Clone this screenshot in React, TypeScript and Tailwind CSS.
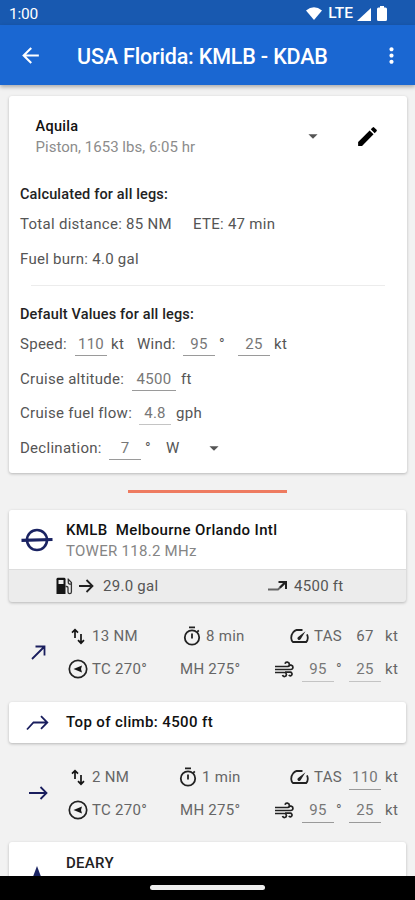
import type { ReactNode } from "react";
import { MdArrowBack, MdArrowDropDown, MdEdit, MdMoreVert } from "react-icons/md";

function Field({ value, className = "w-8", faint = false }: { value: string; className?: string; faint?: boolean }) {
  return (
    <span className={`mb-px flex h-[25px] shrink-0 items-center justify-center border-b-[1.5px] pt-0.5 text-[#777] ${faint ? "border-[#c4c4c4]" : "border-[#9a9a9a]"} ${className}`}>
      {value}
    </span>
  );
}

function Row({ children, className = "" }: { children: ReactNode; className?: string }) {
  return <div className={`flex h-[34.6px] items-center whitespace-pre ${className}`}>{children}</div>;
}

function SwapIcon() {
  return (
    <svg width="14" height="17" viewBox="0 0 14 17" fill="none" stroke="#151515" strokeWidth="1.7">
      <path d="M4 10V2M1 4.6 4 1.6l3 3M10 6v8.600M7 12.200l3 3 3-3" />
    </svg>
  );
}

function TimerIcon() {
  return (
    <svg className="-mt-0.5" width="18" height="20" viewBox="0 0 18 20" fill="none" stroke="#222" strokeWidth="1.8">
      <circle cx="9" cy="11.500" r="7.200" />
      <path d="M6 1.400h6M9 7.500v5M14.300 5.800l1.500-1.500" />
    </svg>
  );
}

function CourseIcon() {
  return (
    <svg className="-mt-0.5" width="20" height="20" viewBox="0 0 20 20">
      <circle cx="10" cy="10" r="8.700" fill="none" stroke="#222" strokeWidth="1.700" />
      <path d="M5.500 10 14 6.500 13 10l1 3.500z" fill="#151515" />
    </svg>
  );
}

function GaugeIcon() {
  return (
    <svg className="-mt-px" width="19" height="16" viewBox="0 0 19 16" fill="none" stroke="#222" strokeWidth="1.800">
      <path d="M12.500 2H6.500Q4.500 2.300 3 4.500 1 7 1.200 10q.2 2.500 1.600 4h13.400q1.500-1.500 1.600-4 0-2-.8-3.600" strokeLinejoin="round" />
      <path d="M7.800 9.200 15.500 3.300 10.600 11.300a1.700 1.700 0 0 1-2.800-2.100z" fill="#222" stroke="none" />
    </svg>
  );
}

function WindIcon() {
  return (
    <svg className="-mt-px" width="20" height="17" viewBox="0 0 20 17" fill="none" stroke="#222" strokeWidth="1.700">
      <path d="M1 5.500h12.200a2.200 2.200 0 1 0-2.200-2.700M1 8.500h15.700a2.200 2.200 0 1 0-2.100-2.800M1 11.500h9.500a2 2 0 1 1-2 2.600M11 11.200h5.300a1.800 1.800 0 1 1-1.500 2.900" />
    </svg>
  );
}

function FuelIcon() {
  return (
    <svg width="17" height="18" viewBox="0 0 17 18">
      <path d="M.5 17V2.200Q.5.800 2 .800h6Q9.500.800 9.500 2.200V17z" fill="#151515" />
      <path d="M2.500 3h5v4h-5z" fill="#eee" />
      <path d="M9.500 9.500h1.200q1.300 0 1.300 1.300v4.200a1.700 1.700 0 0 0 3.400 0V5.500L11.700 1.600M12.300 2.800v3q0 1.500 3 1.200" fill="none" stroke="#333" strokeWidth="1.300" />
    </svg>
  );
}

type LegProps = {
  icon: ReactNode;
  distance: string;
  time: string;
  timeClass: string;
  tas: ReactNode;
  faint?: boolean;
};

function Leg({ icon, distance, time, timeClass, tas, faint }: LegProps) {
  return (
    <div className="flex h-[100px] shrink-0 text-[#666]">
      <div className="flex w-[67px] shrink-0 justify-center pt-[43px] pl-[9px]">{icon}</div>
      <div className="grid flex-1 grid-cols-[112px_94px_1fr] grid-rows-[33px_33px] items-center pt-[18px] whitespace-pre">
        <div className="flex items-center">
          <span className="ml-1 w-[21px]"><SwapIcon /></span>
          {distance}
        </div>
        <div className={`flex items-center gap-[5px] ${timeClass}`}>
          <TimerIcon />
          {time}
        </div>
        <div className="flex items-center pl-[17px]">
          <span className="w-6"><GaugeIcon /></span>
          <span className="w-[35px]">TAS</span>
          {tas}
          <span className="ml-1">kt</span>
        </div>
        <div className="flex items-center pl-px">
          <span className="w-[24px]"><CourseIcon /></span>
          TC 270°
        </div>
        <div className="pl-px">MH 275°</div>
        <div className="flex items-center pl-px">
          <span className="w-[28px]"><WindIcon /></span>
          <Field value="95" faint={faint} />
          <span className="w-[15px] pl-0.5">°</span>
          <Field value="25" faint={faint} />
          <span className="ml-1">kt</span>
        </div>
      </div>
    </div>
  );
}

export default function App() {
  return (
    <div className="relative flex h-[900px] w-[415px] flex-col overflow-hidden bg-[#f2f2f2] font-[Roboto,sans-serif] text-[15px] tracking-[0.28px] text-[#555]">
      <div className="flex h-[25px] shrink-0 items-center bg-[#1859b0] pr-[28px] pl-[9px] text-[15.5px] text-white">
        <span className="pt-1 tracking-[-0.2px]">1:00</span>
        <svg className="mt-0.5 ml-auto" width="16" height="13" viewBox="0 0 16 13" fill="#fff">
          <path d="M0 3.500Q8-3 16 3.500L8 13z" />
        </svg>
        <span className="ml-1.5 pt-0.5 font-medium tracking-normal">LTE</span>
        <svg className="mt-1 ml-1" width="14" height="13" viewBox="0 0 14 13" fill="#fff">
          <path d="M14 0v13H0z" />
        </svg>
        <svg className="mt-0.5 ml-[6px]" width="10" height="15" viewBox="0 0 10 15" fill="#fff">
          <path d="M3 0h4v1.500h1.500Q10 1.500 10 3v10.500Q10 15 8.500 15h-7Q0 15 0 13.500V3Q0 1.500 1.500 1.500H3z" />
        </svg>
      </div>
      <header className="z-10 flex h-[60px] shrink-0 items-center bg-[#1a67d2] pr-[11px] pl-[18px] text-white shadow-[0_2px_4px_rgba(0,0,0,0.3)]">
        <MdArrowBack size={25} />
        <h1 className="ml-[34px] flex-1 pt-1 text-[21.5px] font-medium tracking-[-0.17px] whitespace-nowrap">USA Florida: KMLB - KDAB</h1>
        <MdMoreVert size={25} />
      </header>

      <section className="mx-[9px] mt-[11px] h-[377px] w-[398px] shrink-0 rounded-[3px] bg-white px-[11px] shadow-[0_1px_3px_rgba(0,0,0,0.25)]">
        <div className="flex h-[80px] items-center pl-[15.5px]">
          <div className="flex-1 pt-0.5 leading-[20px]">
            <div className="text-[14.5px] font-medium text-[#111]">Aquila</div>
            <div className="tracking-[0.02px] text-[#8c8c8c]">Piston, 1653 lbs, 6:05 hr</div>
          </div>
          <MdArrowDropDown size={22} />
          <MdEdit size={25} color="#000" className="mr-[16px] ml-[31px]" />
        </div>
        <div className="mt-px flex h-[34px] items-center pt-0.5 text-[14.5px] font-medium tracking-[0.15px] text-[#222]">Calculated for all legs:</div>
        <div className="flex h-[27px] items-center">
          <span className="w-[173px]">Total distance: 85 NM</span>
          <span>ETE: 47 min</span>
        </div>
        <div className="mt-[4px] flex h-[34px] items-center">Fuel burn: 4.0 gal</div>
        <div className="mx-[11px] mt-[9px] h-px bg-[#ececec]" />
        <div className="mt-[11px] flex h-[34px] items-center pt-0.5 text-[14.5px] font-medium tracking-[0.15px] text-[#222]">Default Values for all legs:</div>
        <Row className="-mt-[4px]">
          <span className="w-[55px]">Speed:</span>
          <Field value="110" />
          <span className="ml-1 w-[26px]">kt</span>
          <span className="w-[46px]">Wind:</span>
          <Field value="95" />
          <span className="w-[23px] pl-1">°</span>
          <Field value="25" />
          <span className="ml-1">kt</span>
        </Row>
        <Row>
          <span className="w-[112px]">Cruise altitude:</span>
          <Field value="4500" className="w-11" />
          <span className="ml-[5px]">ft</span>
        </Row>
        <Row>
          <span className="w-[119px]">Cruise fuel flow:</span>
          <Field value="4.8" faint />
          <span className="ml-[5px]">gph</span>
        </Row>
        <Row>
          <span className="w-[89px]">Declination:</span>
          <Field value="7" />
          <span className="w-[25px] pl-1">°</span>
          <span className="w-[37px]">W</span>
          <MdArrowDropDown size={22} />
        </Row>
      </section>

      <div className="mt-[17px] ml-[128px] h-[3px] w-[159px] shrink-0 bg-[#ee7b60]" />

      <section className="mx-[9px] mt-[17px] h-[92px] shrink-0 rounded-[3px] bg-[#ececec] shadow-[0_1px_3px_rgba(0,0,0,0.25)]">
        <div className="flex h-[59px] items-center rounded-t-[3px] bg-white">
          <svg className="ml-3 w-8" height="24" viewBox="0 0 32 24" fill="none" stroke="#1a2362" strokeWidth="2.600">
            <circle cx="16" cy="12" r="10" />
            <path d="M.5 12.300 31.500 11.500" strokeWidth="3.200" />
          </svg>
          <div className="ml-[13px] pt-0.5 leading-[21px] whitespace-pre">
            <div className="font-medium tracking-[0.36px] text-[#111]">KMLB  Melbourne Orlando Intl</div>
            <div className="text-[#858585]">TOWER 118.2 MHz</div>
          </div>
        </div>
        <div className="flex h-[33px] items-center border-t border-[#ddd] pl-[47px]">
          <FuelIcon />
          <svg className="ml-[6px]" width="15" height="14" viewBox="0 0 15 14" fill="none" stroke="#222" strokeWidth="1.800">
            <path d="M0 7h13.500M7.500 1l6 6-6 6" />
          </svg>
          <span className="ml-[9px] w-[165px]">29.0 gal</span>
          <svg width="20" height="12" viewBox="0 0 20 12" fill="none" strokeWidth="2">
            <path d="M0 9.500h10L17 3" stroke="#666" />
            <path d="M10.500 2h7.500v7M17.500 2 12 7.500" stroke="#222" />
          </svg>
          <span className="ml-[6px]">4500 ft</span>
        </div>
      </section>

      <Leg
        icon={
          <svg width="15" height="15" viewBox="0 0 15 15" fill="none" stroke="#1a1e5e" strokeWidth="1.800">
            <path d="M1 14 13.500 1.500M4.500 1.500h9v9" />
          </svg>
        }
        distance="13 NM"
        time="8 min"
        timeClass="pl-[4px]"
        tas={<span className="w-8 text-center">67</span>}
        faint
      />

      <section className="mx-[9px] flex h-[41px] shrink-0 items-center rounded-[3px] bg-white pl-[17px] text-[#111] shadow-[0_1px_3px_rgba(0,0,0,0.25)]">
        <svg width="23" height="16" viewBox="0 0 23 16" fill="none" stroke="#1a1e5e" strokeWidth="1.800">
          <path d="M1 14.500 7.500 7.500H21M15 1.200l6.300 6.300-6.300 6.300" />
        </svg>
        <span className="ml-[17px] font-medium tracking-[0.38px]">Top of climb: 4500 ft</span>
      </section>

      <Leg
        icon={
          <svg width="19" height="14" viewBox="0 0 19 14" fill="none" stroke="#1a1e5e" strokeWidth="1.800">
            <path d="M0 7h17.500M11.500 1l6 6-6 6" />
          </svg>
        }
        distance="2 NM"
        time="1 min"
        timeClass=""
        tas={<Field value="110" />}
      />

      <section className="mx-[9px] -mt-px flex h-[60px] shrink-0 rounded-[3px] bg-white shadow-[0_1px_3px_rgba(0,0,0,0.25)]">
        <svg className="mt-[24px] ml-[19px]" width="18" height="24" viewBox="0 0 18 24" fill="#1a2362">
          <path d="M9 0 18 24H0z" />
        </svg>
        <span className="mt-[10px] ml-[20px] font-medium text-[#222]">DEARY</span>
      </section>

      <div className="absolute inset-x-0 bottom-0 flex h-6 justify-center bg-black pt-[9px]">
        <div className="h-[5px] w-[115px] rounded-full bg-[#eee]" />
      </div>
    </div>
  );
}
